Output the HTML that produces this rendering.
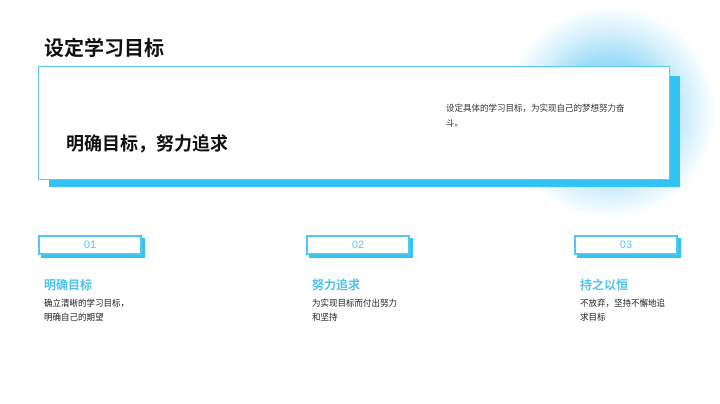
<!DOCTYPE html>
<html><head><meta charset="utf-8"><style>
*{margin:0;padding:0;box-sizing:border-box}
body{width:720px;height:404px;background:#fff;position:relative;overflow:hidden;font-family:"Liberation Sans","Noto Sans CJK SC",sans-serif}
.abs{position:absolute}
.glow{left:505px;top:5px;width:210px;height:215px;border-radius:50%;background:radial-gradient(circle,#7fd3f7 0%,#9edcf8 35%,rgba(200,236,252,0.7) 55%,rgba(255,255,255,0) 71%)}
.title{left:44px;top:32px;font-size:20px;font-weight:bold;color:#111}
.shadow{left:49px;top:76px;width:631px;height:111px;background:#33c3f5}
.main{left:38px;top:66px;width:632px;height:114px;background:#fff;border:1.5px solid #5bc8ee}
.big{left:66px;top:130px;font-size:18px;font-weight:bold;color:#111}
.desc{left:446px;top:101px;width:188px;font-size:8.5px;line-height:15px;color:#333}
.nbs{width:104px;height:20px;background:#33c3f5}
.nb{width:104px;height:20px;background:#fff;border:2px solid #4fc9f2;color:#5bc8ee;font-size:11px;text-align:center;line-height:16px}
.h{font-size:12px;font-weight:bold;color:#4fc3ee}
.t{font-size:8.5px;line-height:14px;color:#222}
</style></head><body>
<div class="abs glow"></div>
<div class="abs title">设定学习目标</div>
<div class="abs shadow"></div>
<div class="abs main"></div>
<div class="abs big">明确目标，努力追求</div>
<div class="abs desc">设定具体的学习目标，为实现自己的梦想努力奋斗。</div>

<div class="abs nbs" style="left:41px;top:238px"></div>
<div class="abs nb" style="left:38px;top:235px">01</div>
<div class="abs h" style="left:44px;top:276px">明确目标</div>
<div class="abs t" style="left:44px;top:296px">确立清晰的学习目标，<br>明确自己的期望</div>

<div class="abs nbs" style="left:309px;top:238px"></div>
<div class="abs nb" style="left:306px;top:235px">02</div>
<div class="abs h" style="left:312px;top:276px">努力追求</div>
<div class="abs t" style="left:312px;top:296px">为实现目标而付出努力<br>和坚持</div>

<div class="abs nbs" style="left:577px;top:238px"></div>
<div class="abs nb" style="left:574px;top:235px">03</div>
<div class="abs h" style="left:580px;top:276px">持之以恒</div>
<div class="abs t" style="left:580px;top:296px">不放弃，坚持不懈地追<br>求目标</div>
</body></html>
